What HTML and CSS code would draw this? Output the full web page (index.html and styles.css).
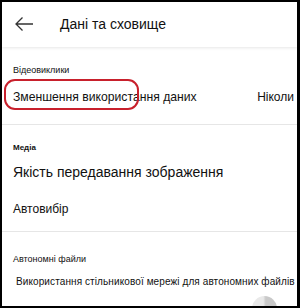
FILE: index.html
```html
<!DOCTYPE html>
<html lang="uk">
<head>
  <meta charset="UTF-8" />
  <title>Дані та сховище</title>
  <link rel="stylesheet" href="styles.css">
</head>
<body>
  <div class="frame">
    <div class="header">
      <svg class="back" width="20" height="16" viewBox="0 0 20 16">
        <path d="M19 8H2M8.5 1.5L2 8l6.5 6.5" fill="none" stroke="#333" stroke-width="1.3" />
      </svg>
      <span class="title">Дані та сховище</span>
    </div>

    <div class="section">
      <div class="label">Відеовиклики</div>
      <div class="row">
        <span class="item mark">Зменшення використання даних</span>
        <span class="value">Ніколи</span>
      </div>
    </div>

    <div class="section">
      <div class="label small">Медіа</div>
      <div class="item big">Якість передавання зображення</div>
      <div class="item sub">Автовибір</div>
    </div>

    <div class="section last">
      <div class="label">Автономні файли</div>
      <div class="item mid">Використання стільникової мережі для автономних файлів</div>
      <div class="toggle"></div>
    </div>
  </div>
</body>
</html>
```

FILE: styles.css
```css
body {
  margin: 0;
  font-family: "Liberation Sans", Arial, sans-serif;
  color: #111;
  background: #fff;
}

.frame {
  width: 300px;
  height: 308px;
  box-sizing: border-box;
  border: 2px solid #000;
  border-right-width: 3px;
  overflow: hidden;
}

.header {
  height: 45px;
  display: flex;
  align-items: center;
  padding-left: 12px;
  box-shadow: 0 1px 3px rgba(0,0,0,0.1);
}

.back {
  margin-right: 26px;
  margin-top: -1px;
}

.title {
  font-size: 14px;
  margin-top: -1px;
}

.section {
  border-bottom: 1px solid #e6e6e6;
  padding: 17px 0 0 11px;
}

.label {
  font-size: 9px;
  line-height: 12px;
}

.label.small {
  font-size: 8px;
  font-weight: bold;
}

.row {
  display: flex;
  justify-content: space-between;
  align-items: center;
  height: 26px;
  margin-top: 8px;
  padding-bottom: 14px;
}

.item {
  font-size: 12px;
}

.mark {
  position: relative;
  font-size: 12.2px;
}

.mark::before {
  content: "";
  position: absolute;
  left: -9px;
  top: -11px;
  width: 131px;
  height: 27px;
  border: 2px solid #c8202c;
  border-radius: 11px;
}

.value {
  font-size: 12px;
  margin-right: 3px;
}

.big {
  font-size: 14px;
  margin-top: 10px;
}

.sub {
  margin-top: 22px;
  padding-bottom: 15px;
}

.mid {
  font-size: 10px;
  letter-spacing: 0.1px;
  margin-top: 11px;
  padding-left: 3px;
  white-space: nowrap;
}

.last {
  border-bottom: none;
  padding-top: 21px;
}

.toggle {
  margin: 9px 0 0 239px;
  width: 25px;
  height: 25px;
  border-radius: 50%;
  background: linear-gradient(to right, #e9e9e9 45%, #c9c9c9 55%);
}
```
